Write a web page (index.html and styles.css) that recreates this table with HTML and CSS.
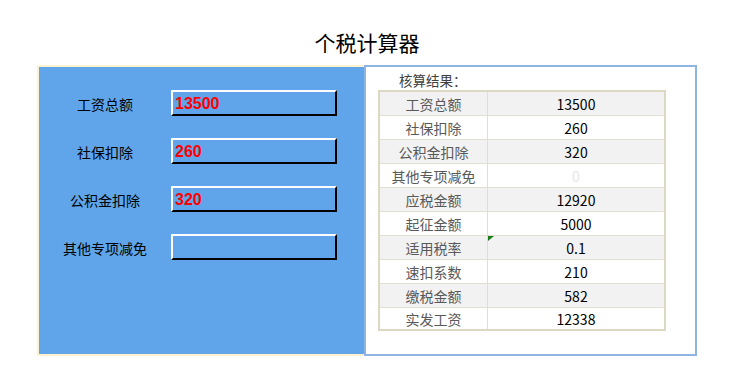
FILE: index.html
```html
<!DOCTYPE html>
<html lang="zh-CN">
<head>
<meta charset="utf-8">
<title>个税计算器</title>
<link rel="stylesheet" href="styles.css">
</head>
<body>
<div class="title">个税计算器</div>
<div class="wrap">
  <div class="left">
    <div class="row"><div class="label">工资总额</div><div class="box">13500</div></div>
    <div class="row"><div class="label">社保扣除</div><div class="box">260</div></div>
    <div class="row"><div class="label">公积金扣除</div><div class="box">320</div></div>
    <div class="row"><div class="label">其他专项减免</div><div class="box"></div></div>
  </div>
  <div class="right">
    <div class="caption">核算结果：</div>
    <div class="tbl">
      <div class="k g">工资总额</div><div class="v g">13500</div>
      <div class="k">社保扣除</div><div class="v">260</div>
      <div class="k g">公积金扣除</div><div class="v g">320</div>
      <div class="k">其他专项减免</div><div class="v zero">0</div>
      <div class="k g">应税金额</div><div class="v g">12920</div>
      <div class="k">起征金额</div><div class="v">5000</div>
      <div class="k g">适用税率</div><div class="v g mark">0.1</div>
      <div class="k">速扣系数</div><div class="v">210</div>
      <div class="k g">缴税金额</div><div class="v g">582</div>
      <div class="k">实发工资</div><div class="v">12338</div>
    </div>
  </div>
</div>
</body>
</html>
```

FILE: styles.css
```css
html, body {
  margin: 0;
  padding: 0;
  background: #ffffff;
  font-family: "Noto Sans CJK SC", "Noto Sans", sans-serif;
  color: #000;
}

.title {
  height: 65px;
  box-sizing: border-box;
  padding-top: 32px;
  line-height: 21px;
  font-size: 21px;
  text-align: center;
}

.wrap {
  display: flex;
  margin-left: 37px;
  width: 660px;
  height: 291px;
}

.left {
  width: 327px;
  box-sizing: border-box;
  border: 2px solid #fff3cf;
  border-right: none;
  background: #60a5e9;
  padding-top: 23px;
  display: flex;
  flex-direction: column;
  gap: 22px;
}

.row {
  display: flex;
  align-items: center;
  height: 26px;
}

.label {
  width: 132px;
  text-align: center;
  font-size: 14px;
  line-height: 16px;
  padding-top: 2px;
}

.box {
  width: 166px;
  height: 26px;
  box-sizing: border-box;
  border-style: solid;
  border-width: 2px;
  border-color: #ffffff #000000 #000000 #ffffff;
  padding-left: 2px;
  color: #ff0000;
  font-family: "Liberation Sans", Arial, sans-serif;
  font-weight: bold;
  font-size: 16px;
  line-height: 23px;
}

.right {
  flex: 1;
  box-sizing: border-box;
  border: 2px solid #8db4e3;
  background: #ffffff;
  padding-left: 12px;
}

.caption {
  height: 23px;
  box-sizing: border-box;
  padding-top: 4px;
  padding-left: 21px;
  line-height: 19px;
  font-size: 13.5px;
  color: #404040;
}

.tbl {
  display: grid;
  grid-template-columns: 107px 176px;
  grid-template-rows: repeat(9, 23px) 21px;
  gap: 1px;
  width: 288px;
  box-sizing: border-box;
  border: 2px solid #dcd8c3;
  background: #e3dfd0;
}

.k, .v {
  background: #ffffff;
  display: flex;
  align-items: center;
  justify-content: center;
  font-size: 14px;
  line-height: 16px;
}

.k {
  color: #595959;
}

.v {
  color: #000;
  position: relative;
}

.g {
  background: #f2f2f2;
}

.zero {
  color: #e6e6e6;
}

.mark::before {
  content: "";
  position: absolute;
  left: 0;
  top: 0;
  width: 0;
  height: 0;
  border-top: 5px solid #1a7c1a;
  border-right: 6px solid transparent;
}
```
